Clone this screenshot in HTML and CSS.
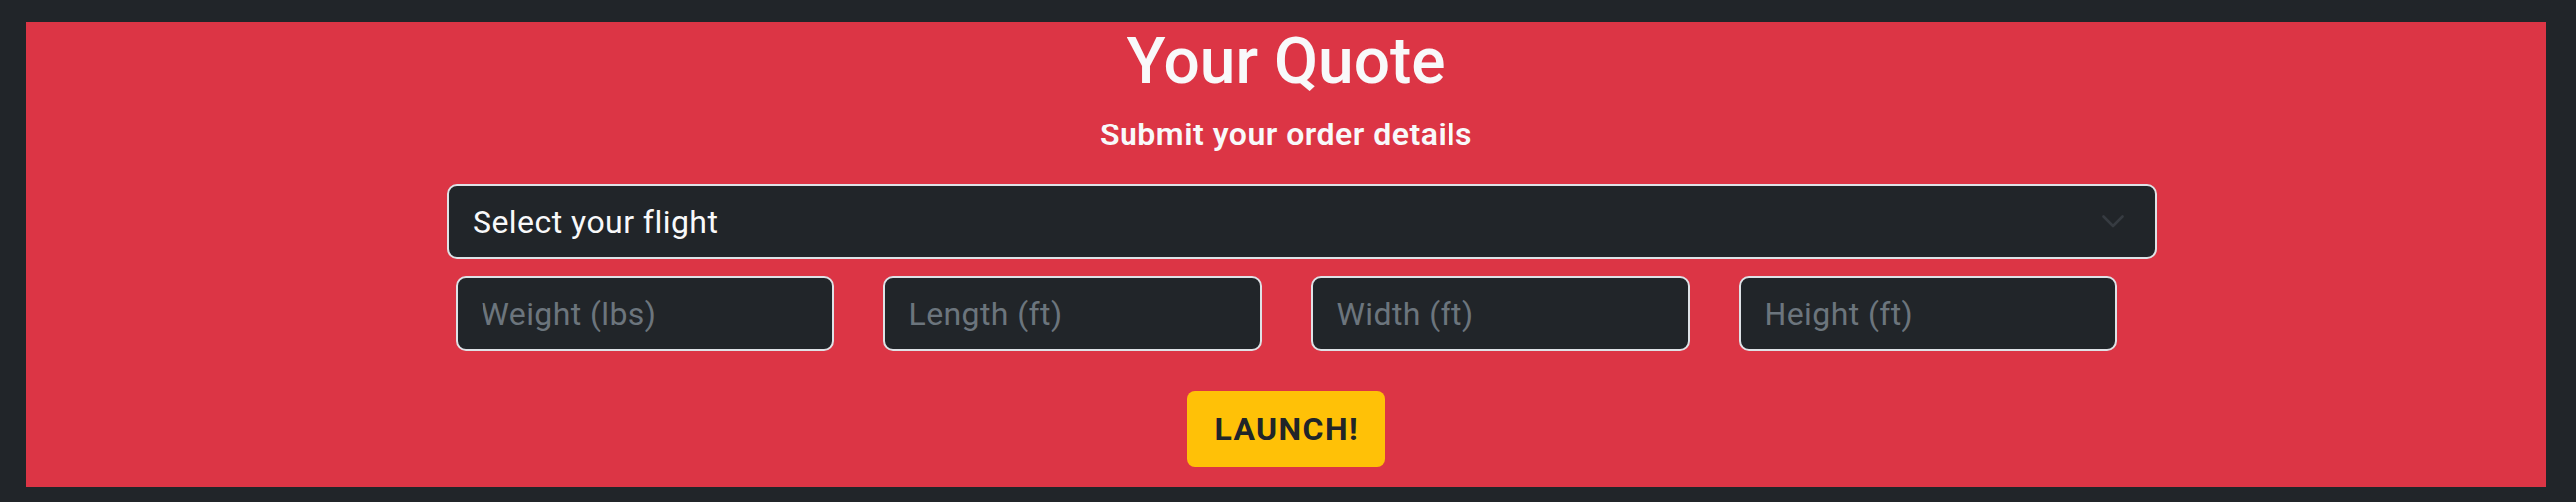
FILE: index.html
```html
<!DOCTYPE html>
<html lang="en">
<head>
<meta charset="utf-8">
<title>Your Quote</title>
<link rel="stylesheet" href="styles.css">
</head>
<body>
<main class="page">
  <section class="quote">
    <h1 class="title">Your Quote</h1>
    <h5 class="subtitle">Submit your order details</h5>
    <form class="form">
      <div class="select">
        <span class="select-text">Select your flight</span>
        <svg class="chevron" width="22" height="13" viewBox="0 0 22 13" aria-hidden="true">
          <path d="M1.5 1.5 L11 11 L20.5 1.5" fill="none" stroke="#363b41" stroke-width="2.6" stroke-linecap="round" stroke-linejoin="round"/>
        </svg>
      </div>
      <div class="dims">
        <input class="field" type="text" placeholder="Weight (lbs)">
        <input class="field" type="text" placeholder="Length (ft)">
        <input class="field" type="text" placeholder="Width (ft)">
        <input class="field" type="text" placeholder="Height (ft)">
      </div>
      <button class="launch" type="button">LAUNCH!</button>
    </form>
  </section>
</main>
</body>
</html>
```

FILE: styles.css
```css
html, body {
  margin: 0;
  padding: 0;
  background: #212529;
}

.page {
  padding: 22px 30px 15px 26px;
  font-family: Roboto, "Liberation Sans", sans-serif;
}

.quote {
  background: #dc3545;
  height: 467px;
  box-sizing: border-box;
  padding-top: 2px;
  display: flex;
  flex-direction: column;
  align-items: center;
}

.title {
  margin: 0;
  font-size: 64px;
  line-height: 76.8px;
  font-weight: 500;
  color: #f8f9fa;
}

.subtitle {
  margin: 15px 0 0;
  font-size: 32px;
  line-height: 38.4px;
  font-weight: 600;
  letter-spacing: 0.5px;
  color: #f8f9fa;
}

.form {
  display: flex;
  flex-direction: column;
  align-items: center;
  margin-top: 31px;
}

.select {
  width: 1716px;
  height: 75px;
  box-sizing: border-box;
  margin-left: 32px;
  border: 2px solid #dee2e6;
  border-radius: 10px;
  background: #212529;
  display: flex;
  align-items: center;
  justify-content: space-between;
  padding: 0 31px 0 24px;
}

.select-text {
  font-size: 32px;
  letter-spacing: 0.45px;
  color: #f8f9fa;
}

.chevron {
  display: block;
}

.dims {
  display: grid;
  grid-template-columns: repeat(4, 380px);
  column-gap: 49px;
  margin-top: 17px;
}

.field {
  width: 380px;
  height: 75px;
  box-sizing: border-box;
  border: 2px solid #dee2e6;
  border-radius: 10px;
  background: #212529;
  color: #f8f9fa;
  font-family: Roboto, "Liberation Sans", sans-serif;
  font-size: 32px;
  letter-spacing: 0.4px;
  padding: 0 24px;
  outline: none;
}

.field::placeholder {
  color: #6c757d;
  opacity: 1;
}

.launch {
  margin-top: 41px;
  width: 198px;
  height: 76px;
  border: none;
  border-radius: 8px;
  background: #ffc107;
  color: #212529;
  font-family: Roboto, "Liberation Sans", sans-serif;
  font-size: 32px;
  font-weight: 700;
  letter-spacing: 1.4px;
  padding: 0 0 0 1.4px;
}
```
